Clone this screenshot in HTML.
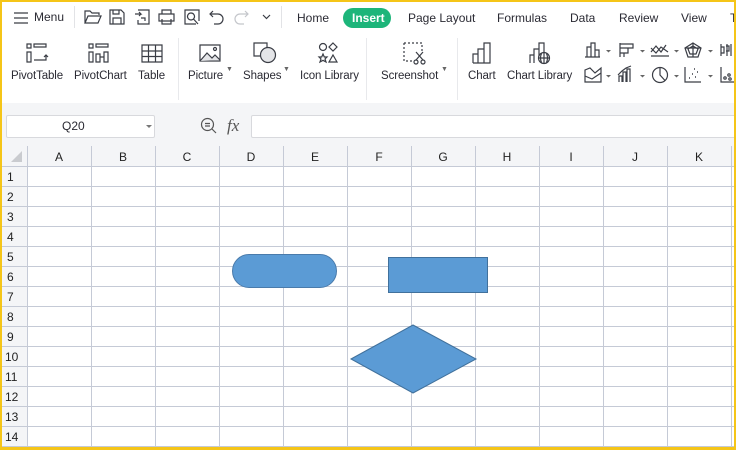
<!DOCTYPE html>
<html><head><meta charset="utf-8">
<style>
*{margin:0;padding:0;box-sizing:border-box}
body{width:736px;height:450px;overflow:hidden;background:#fff;font-family:"Liberation Sans",sans-serif;font-size:12px;color:#222;position:relative}
.abs{position:absolute}
.t{position:absolute;white-space:nowrap;font-size:12px;color:#2a2a33}
.r{font-size:11.5px;letter-spacing:-0.1px}
svg{position:absolute;overflow:visible}
.ic{fill:none;stroke:#3a3d45;stroke-width:1.2}
</style></head><body>
<div class="abs" style="left:0;top:0;width:736px;height:36px;background:#fff"></div>
<svg style="left:13px;top:11px" width="16" height="14" class="ic"><path d="M1 2H15M1 7H15M1 12H15"/></svg>
<div class="t" style="left:34px;top:10px">Menu</div>
<div class="abs" style="left:74px;top:6px;width:1px;height:22px;background:#e2e3e6"></div>
<svg style="left:84px;top:9px" width="18" height="16" class="ic"><path d="M1 14V2H6L8 4H15V6M1 14L4 7H17L14 14Z"/></svg>
<svg style="left:109px;top:9px" width="16" height="16" class="ic"><path d="M1 1H12L15 4V15H1Z M4 15V9H12V15 M4 1V5H10V1"/></svg>
<svg style="left:134px;top:9px" width="16" height="16" class="ic"><path d="M4 1H15V15H4V11 M1 5H7L5 3 M7 5L5 7 M7 9H11V12"/></svg>
<svg style="left:158px;top:9px" width="17" height="16" class="ic"><path d="M4 5V1H13V5 M1 5H16V12H1Z M4 10V15H13V10"/></svg>
<svg style="left:184px;top:9px" width="16" height="16" class="ic"><path d="M12 15H1V1H15V12 M7 4a3.5 3.5 0 1 0 0.01 0 M9.5 10L14 15"/></svg>
<svg style="left:209px;top:9px" width="15" height="15" class="ic"><path d="M4 2L1 5L4 8M1 5H9A5 5 0 0 1 9 15H5"/></svg>
<svg style="left:234px;top:9px" width="15" height="15"><path d="M11 2L14 5L11 8M14 5H6A5 5 0 0 0 6 15H10" fill="none" stroke="#c4c6cb" stroke-width="1.2"/></svg>
<svg style="left:262px;top:14px" width="9" height="6" class="ic"><path d="M1 1L4.5 4.5L8 1"/></svg>
<div class="abs" style="left:281px;top:6px;width:1px;height:22px;background:#e2e3e6"></div>
<div class="t" style="left:297px;top:11px">Home</div>
<div class="abs" style="left:343px;top:8px;width:48px;height:20px;border-radius:10px;background:#1db57a"></div>
<div class="t" style="left:352px;top:11px;color:#fff;font-weight:bold">Insert</div>
<div class="t" style="left:408px;top:11px">Page Layout</div>
<div class="t" style="left:497px;top:11px">Formulas</div>
<div class="t" style="left:570px;top:11px">Data</div>
<div class="t" style="left:619px;top:11px">Review</div>
<div class="t" style="left:681px;top:11px">View</div>
<div class="t" style="left:730px;top:11px">T</div>

<svg style="left:26px;top:43px" width="22" height="20" class="ic"><path d="M1 1H5V5H1Z M8 1H20V4H8Z M1 9H5V19H1Z M8 17H20V12 M18 14L20 12L22 14"/></svg>
<svg style="left:88px;top:43px" width="22" height="20" class="ic"><path d="M1 1H5V5H1Z M8 1H20V4H8Z M1 9H5V19H1Z M8 19V11H12V19Z M12 19V14H16V19 M16 19V9H20V19Z"/></svg>
<svg style="left:141px;top:44px" width="22" height="19" class="ic"><path d="M1 1H21V18H1Z M1 7H21M1 12.5H21M7.5 1V18M14.5 1V18"/></svg>
<div class="abs" style="left:178px;top:38px;width:1px;height:62px;background:#e8e9ec"></div>
<svg style="left:199px;top:44px" width="22" height="18" class="ic"><path d="M1 1H21V17H1Z" /><path d="M1 17L8 9L13 14L16 11L21 16" fill="#e4e5e8" stroke="#3a3d45"/><circle cx="16" cy="5" r="1.5"/></svg>
<svg style="left:253px;top:42px" width="24" height="22" class="ic"><path d="M1 1H14V14H1Z"/><circle cx="15" cy="13" r="7.5" fill="#e4e5e8"/></svg>
<svg style="left:318px;top:42px" width="22" height="22" class="ic"><circle cx="5" cy="5" r="3.5"/><path d="M15 1L19 5L15 9L11 5Z M5 12L6.3 15H9L7 17L8 20L5 18.3L2 20L3 17L1 15H3.7Z M15 13L19 20H11Z"/></svg>
<div class="t r" style="left:11px;top:70px">PivotTable</div>
<div class="t r" style="left:74px;top:70px">PivotChart</div>
<div class="t r" style="left:138px;top:70px">Table</div>
<div class="t r" style="left:188px;top:70px">Picture</div><div class="t" style="left:226px;top:66px;font-size:7px;color:#666">▼</div>
<div class="t r" style="left:243px;top:70px">Shapes</div><div class="t" style="left:283px;top:66px;font-size:7px;color:#666">▼</div>
<div class="t r" style="left:300px;top:70px">Icon Library</div>
<div class="abs" style="left:366px;top:38px;width:1px;height:62px;background:#e8e9ec"></div>
<svg style="left:403px;top:42px" width="22" height="22" class="ic"><path d="M1 1H19V10 M1 1V19H9" stroke-dasharray="2 2"/><circle cx="13" cy="20" r="2"/><circle cx="20" cy="20" r="2"/><path d="M13 18L20 10 M20 18L13 10"/></svg>
<div class="t r" style="left:381px;top:70px">Screenshot</div><div class="t" style="left:441px;top:66px;font-size:7px;color:#666">▼</div>
<div class="abs" style="left:457px;top:38px;width:1px;height:62px;background:#e8e9ec"></div>
<svg style="left:472px;top:42px" width="20" height="22" class="ic"><path d="M1 21V12H6V21 M6 21V7H12V21 M12 21V1H18V21H1"/></svg>
<svg style="left:529px;top:42px" width="24" height="22" class="ic"><path d="M1 21V13H5V21 M5 21V7H10V14 M10 9V1H15V11"/><circle cx="15" cy="16" r="5.5"/><path d="M9.5 16H20.5 M15 10.5V21.5 M12.5 11.5Q10.5 16 12.5 20.5 M17.5 11.5Q19.5 16 17.5 20.5"/></svg>
<div class="t r" style="left:468px;top:70px">Chart</div>
<div class="t r" style="left:507px;top:70px">Chart Library</div>
<svg style="left:584px;top:42px" width="150" height="45" class="ic">
<path d="M1 15H16 M3 15V5H7V15 M7 15V1H11V15 M11 15V8H15V15"/><path d="M22 8L24.5 10.5L27 8Z" fill="#666" stroke="none"/>
<path d="M36 1V15 M36 2H49V6H36 M36 6H44V11H36 M36 11H40V15"/><path d="M56 8L58.5 10.5L61 8Z" fill="#666" stroke="none"/>
<path d="M67 14H85 M67 10L72 4L77 10L82 3 M67 6L72 11L77 5L84 10"/><path d="M90 8L92.5 10.5L95 8Z" fill="#666" stroke="none"/>
<path d="M109 1L117 6L114 15H104L101 6Z M109 4L114 7L112 12H106L104 7Z M109 1V15 M101 6L117 6"/><path d="M124 8L126.5 10.5L129 8Z" fill="#666" stroke="none"/>
<path d="M137 2V14 M137 5H140V11H137 M143 2V14 M142 4H145V9H142 M147 2V14"/>
<path d="M1 28L6 26L11 31L17 26V40H1Z M1 34L8 37L17 31"/><path d="M22 33L24.5 35.5L27 33Z" fill="#666" stroke="none"/>
<path d="M35 40V34H38V40 M39 40V30H42V40 M43 40V27H46V40 M34 33L38 29L42 26L47 24"/><path d="M56 33L58.5 35.5L61 33Z" fill="#666" stroke="none"/>
<circle cx="76" cy="33" r="7.5"/><path d="M76 25.5V33L81 38.5"/><path d="M90 33L92.5 35.5L95 33Z" fill="#666" stroke="none"/>
<path d="M101 25V40H117"/><path d="M105 36h1M108 32h1M111 35h1M113 30h1M110 27h1" stroke-width="1.6"/><path d="M124 33L126.5 35.5L129 33Z" fill="#666" stroke="none"/>
<path d="M137 25V40H150"/><circle cx="141" cy="36" r="1.2"/><circle cx="145" cy="33" r="1.2"/><circle cx="146" cy="37" r="1.2"/>
</svg>

<div class="abs" style="left:0;top:103px;width:736px;height:43px;background:#f4f5f7"></div>
<div class="abs" style="left:6px;top:115px;width:149px;height:23px;background:#fff;border:1px solid #d8d9dd;border-radius:2px"></div>
<div class="t" style="left:62px;top:119px;font-size:12px">Q20</div>
<svg style="left:146px;top:125px" width="6" height="4"><path d="M0 0L3 3L6 0Z" fill="#777"/></svg>
<svg style="left:200px;top:117px" width="18" height="18"><circle cx="7.5" cy="7.5" r="6" fill="none" stroke="#555" stroke-width="1.2"/><path d="M5 6.5H10M5 9H10M12 12L16 16" stroke="#555" stroke-width="1.2"/></svg>
<div class="t" style="left:227px;top:116px;font-family:'Liberation Serif',serif;font-style:italic;font-size:17px;color:#555">fx</div>
<div class="abs" style="left:251px;top:115px;width:490px;height:23px;background:#fff;border:1px solid #d8d9dd;border-radius:2px"></div>

<svg style="left:0;top:146px" width="736" height="304">
<rect x="0" y="0" width="736" height="20" fill="#f4f5f7"/>
<rect x="0" y="0" width="27" height="304" fill="#f4f5f7"/>
<path d="M22 5V16H11Z" fill="#c9cbcf"/>
<g stroke="#c5cad6" stroke-width="1">
<path d="M27.5 0V304M91.5 0V304M155.5 0V304M219.5 0V304M283.5 0V304M347.5 0V304M411.5 0V304M475.5 0V304M539.5 0V304M603.5 0V304M667.5 0V304M731.5 0V304"/>
<path d="M0 20.5H736M0 40.5H736M0 60.5H736M0 80.5H736M0 100.5H736M0 120.5H736M0 140.5H736M0 160.5H736M0 180.5H736M0 200.5H736M0 220.5H736M0 240.5H736M0 260.5H736M0 280.5H736M0 300.5H736"/>
</g>
<g font-family="Liberation Sans" font-size="12" fill="#222" text-anchor="middle">
<text x="59" y="15">A</text><text x="123" y="15">B</text><text x="187" y="15">C</text><text x="251" y="15">D</text><text x="315" y="15">E</text><text x="379" y="15">F</text><text x="443" y="15">G</text><text x="507" y="15">H</text><text x="571" y="15">I</text><text x="635" y="15">J</text><text x="699" y="15">K</text>
</g>
<g font-family="Liberation Sans" font-size="12" fill="#222">
<text x="7" y="35">1</text><text x="7" y="55">2</text><text x="7" y="75">3</text><text x="7" y="95">4</text><text x="7" y="115">5</text><text x="7" y="135">6</text><text x="7" y="155">7</text><text x="7" y="175">8</text><text x="7" y="195">9</text><text x="5" y="215">10</text><text x="5" y="235">11</text><text x="5" y="255">12</text><text x="5" y="275">13</text><text x="5" y="295">14</text>
</g>
<rect x="232.5" y="108.5" width="104" height="33" rx="16.5" fill="#5b9bd5" stroke="#4a7bab"/>
<rect x="388.5" y="111.5" width="99" height="35" fill="#5b9bd5" stroke="#41719c"/>
<path d="M351 213L413 179L476 213L413 247Z" fill="#5b9bd5" stroke="#41719c"/>
</svg>
<div class="abs" style="left:0;top:0;width:736px;height:450px;border:2px solid #f5c518;border-bottom-width:3px;pointer-events:none"></div>
</body></html>
